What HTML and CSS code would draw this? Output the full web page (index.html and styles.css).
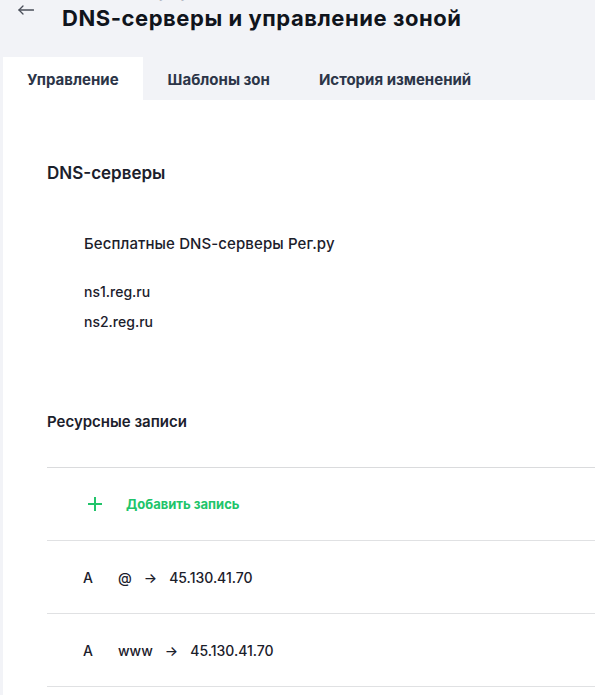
FILE: index.html
```html
<!DOCTYPE html>
<html lang="ru">
<head>
<meta charset="utf-8">
<title>DNS-серверы и управление зоной</title>
<link rel="stylesheet" href="styles.css">
</head>
<body>
<div class="page">
  <header class="page-head">
    <a class="back" href="#" aria-label="Назад">
      <svg width="16" height="10" viewBox="0 0 16 10" fill="none" stroke="currentColor" stroke-width="1.3" stroke-linecap="round" stroke-linejoin="round"><path d="M15.5 5H1"/><path d="M5 1L1 5l4 4"/></svg>
    </a>
    <div class="head-text">
      <div class="crumbs">Мои домены и услуги</div>
      <h1 class="title">DNS-серверы и управление зоной</h1>
    </div>
  </header>

  <nav class="tabs">
    <a class="tab tab-active" href="#">Управление</a>
    <a class="tab" href="#">Шаблоны зон</a>
    <a class="tab" href="#">История изменений</a>
  </nav>

  <main class="panel">
    <section class="servers">
      <h2 class="section-title">DNS-серверы</h2>
      <div class="ns">
        <div class="ns-title">Бесплатные DNS-серверы Рег.ру</div>
        <ul class="ns-list">
          <li>ns1.reg.ru</li>
          <li>ns2.reg.ru</li>
        </ul>
      </div>
    </section>

    <section class="records">
      <h2 class="section-title records-title">Ресурсные записи</h2>
      <div class="rec-list">
        <a class="rec rec-add" href="#">
          <svg class="plus" width="14" height="14" viewBox="0 0 14 14" stroke="currentColor" stroke-width="2"><path d="M7 0v14M0 7h14"/></svg>
          <span>Добавить запись</span>
        </a>
        <div class="rec">
          <span class="rec-type">A</span>
          <span class="rec-name">@</span>
          <span class="rec-arrow">→</span>
          <span class="rec-value">45.130.41.70</span>
        </div>
        <div class="rec">
          <span class="rec-type">A</span>
          <span class="rec-name">www</span>
          <span class="rec-arrow">→</span>
          <span class="rec-value">45.130.41.70</span>
        </div>
      </div>
    </section>
  </main>
</div>
</body>
</html>
```

FILE: styles.css
```css
* { box-sizing: border-box; }

html, body {
  margin: 0;
  padding: 0;
  height: 100%;
}

body {
  background: #f2f3f7;
  font-family: "Inter", "Noto Sans", sans-serif;
  color: #1b202b;
  overflow: hidden;
}

.page {
  min-height: 100%;
  display: flex;
  flex-direction: column;
}

/* header with back link, breadcrumbs and page title */
.page-head {
  display: flex;
  align-items: flex-start;
  padding-left: 18px;
  height: 57px;
}

.back {
  display: flex;
  color: #4a4f5a;
  margin-top: 5px;
  width: 44px;
}

.head-text {
  margin-top: -12px;
}

/* breadcrumbs sit above the viewport top, only their tails peek out */
.crumbs {
  margin: -3px 0 3px;
  font-size: 13px;
  line-height: 17px;
  color: #b4b8c2;
}

.title {
  margin: 0;
  font-size: 22px;
  line-height: 26px;
  font-weight: 700;
  color: #10141c;
  letter-spacing: 0.55px;
}

/* tabs */
.tabs {
  display: flex;
  padding-left: 3px;
  height: 43px;
}

.tab {
  display: block;
  padding: 3px 24px 0;
  line-height: 40px;
  font-size: 15px;
  font-weight: 700;
  color: #2c3548;
  text-decoration: none;
}

.tab + .tab {
  padding-left: 25px;
}

.tab-active {
  background: #fff;
}

/* white content panel */
.panel {
  flex: 1;
  margin-left: 3px;
  background: #fff;
  padding-left: 44px;
}

.section-title {
  margin: 0;
  font-size: 17px;
  line-height: 24px;
  font-weight: 600;
  color: #1b202b;
}

.servers {
  padding-top: 61px;
}

.ns {
  padding-left: 37px;
  padding-top: 48px;
}

.ns-title {
  font-size: 15px;
  line-height: 22px;
  font-weight: 500;
  letter-spacing: 0.1px;
}

.ns-list {
  list-style: none;
  margin: 0;
  padding: 22px 0 0;
  font-size: 14px;
  line-height: 30px;
  font-weight: 500;
}

.records {
  padding-top: 74px;
}

.records-title {
  font-size: 15px;
  line-height: 22px;
  font-weight: 600;
}

.rec-list {
  margin-top: 34px;
  border-top: 1px solid #dadbdd;
}

.rec {
  display: flex;
  align-items: center;
  height: 73px;
  border-bottom: 1px solid #e0e1e3;
  padding-left: 36px;
  font-size: 14px;
  font-weight: 500;
  color: #1b202b;
  text-decoration: none;
}

.rec-add {
  padding-left: 41px;
  color: #21c46a;
  font-size: 13px;
  font-weight: 700;
}

.plus {
  margin-right: 24px;
}

.rec-type {
  width: 35px;
}

.rec-arrow {
  margin: 0 12px;
}
```
